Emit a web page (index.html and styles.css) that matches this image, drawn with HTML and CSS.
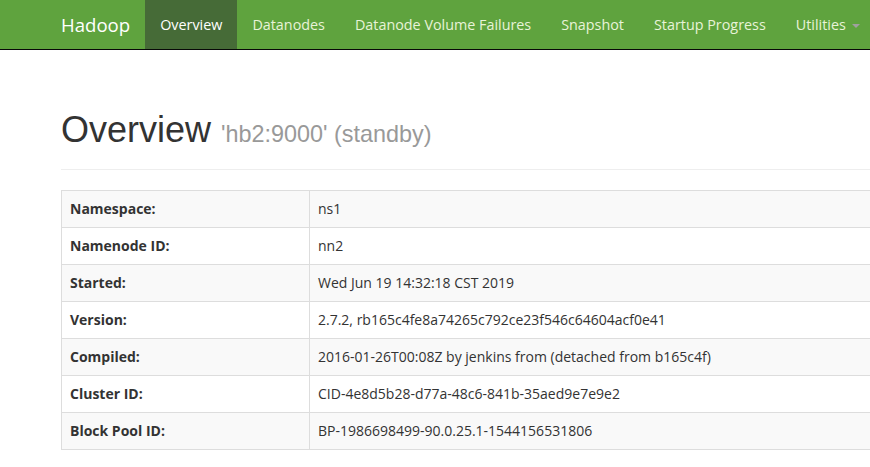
FILE: index.html
```html
<!DOCTYPE html>
<html>
<head>
<meta charset="utf-8">
<title>Namenode information</title>
<link rel="stylesheet" href="styles.css">
</head>
<body>
<header class="navbar">
  <div class="nav-inner">
    <a class="brand" href="#">Hadoop</a>
    <ul class="nav">
      <li class="active"><a href="#">Overview</a></li>
      <li><a href="#">Datanodes</a></li>
      <li><a href="#">Datanode Volume Failures</a></li>
      <li><a href="#">Snapshot</a></li>
      <li><a href="#">Startup Progress</a></li>
      <li><a href="#">Utilities <span class="caret"></span></a></li>
    </ul>
  </div>
</header>
<main class="container">
  <div class="page-header">
    <h1>Overview <small>'hb2:9000' (standby)</small></h1>
  </div>
  <table class="info">
    <tr><th>Namespace:</th><td>ns1</td></tr>
    <tr><th>Namenode ID:</th><td>nn2</td></tr>
    <tr><th>Started:</th><td>Wed Jun 19 14:32:18 CST 2019</td></tr>
    <tr><th>Version:</th><td>2.7.2, rb165c4fe8a74265c792ce23f546c64604acf0e41</td></tr>
    <tr><th>Compiled:</th><td>2016-01-26T00:08Z by jenkins from (detached from b165c4f)</td></tr>
    <tr><th>Cluster ID:</th><td>CID-4e8d5b28-d77a-48c6-841b-35aed9e7e9e2</td></tr>
    <tr><th>Block Pool ID:</th><td>BP-1986698499-90.0.25.1-1544156531806</td></tr>
  </table>
</main>
</body>
</html>
```
FILE: styles.css
```css
html { overflow: hidden; }
body {
  margin: 0;
  font-family: "Open Sans", "Noto Sans", sans-serif;
  font-size: 14px;
  line-height: 20px;
  color: #333;
  background: #fff;
}
a { text-decoration: none; }

.navbar {
  height: 50px;
  box-sizing: border-box;
  background: #5fa33e;
  border-bottom: 1px solid #080808;
}
.nav-inner {
  display: flex;
  height: 49px;
  padding-left: 46px;
}
.brand {
  display: block;
  padding: 0 15px;
  font-size: 18.6px;
  line-height: 49px;
  color: #fff;
}
.nav {
  display: flex;
  margin: 0;
  padding: 0;
  list-style: none;
  white-space: nowrap;
}
.nav a {
  display: block;
  padding: 0 15px;
  font-size: 14.35px;
  line-height: 49px;
  color: #e8f3d8;
}
.nav .active a {
  background: #466b37;
  color: #fff;
}
.caret {
  display: inline-block;
  width: 0;
  height: 0;
  margin-left: 2px;
  vertical-align: middle;
  border-top: 4px solid #a0a0a0;
  border-left: 4px solid transparent;
  border-right: 4px solid transparent;
}

.container {
  width: 1140px;
  margin-left: 61px;
}
.page-header {
  margin: 60px 0 20px;
  padding-bottom: 9px;
  border-bottom: 1px solid #eee;
}
h1 {
  height: 40px;
  margin: 0 0 10px;
  font-family: "Liberation Sans", Arial, sans-serif;
  font-size: 36px;
  font-weight: 400;
  line-height: 40px;
  color: #333;
}
h1 small {
  font-size: 23.4px;
  line-height: 1;
  color: #999;
}

.info {
  width: 100%;
  border-collapse: collapse;
  border: 1px solid #ddd;
}
.info th, .info td {
  padding: 8px;
  border: 1px solid #ddd;
  text-align: left;
  vertical-align: top;
  line-height: 20px;
}
.info th {
  width: 231px;
  font-weight: 700;
}
.info td { font-weight: 400; }
.info tr:nth-child(odd) { background: #f9f9f9; }
```
